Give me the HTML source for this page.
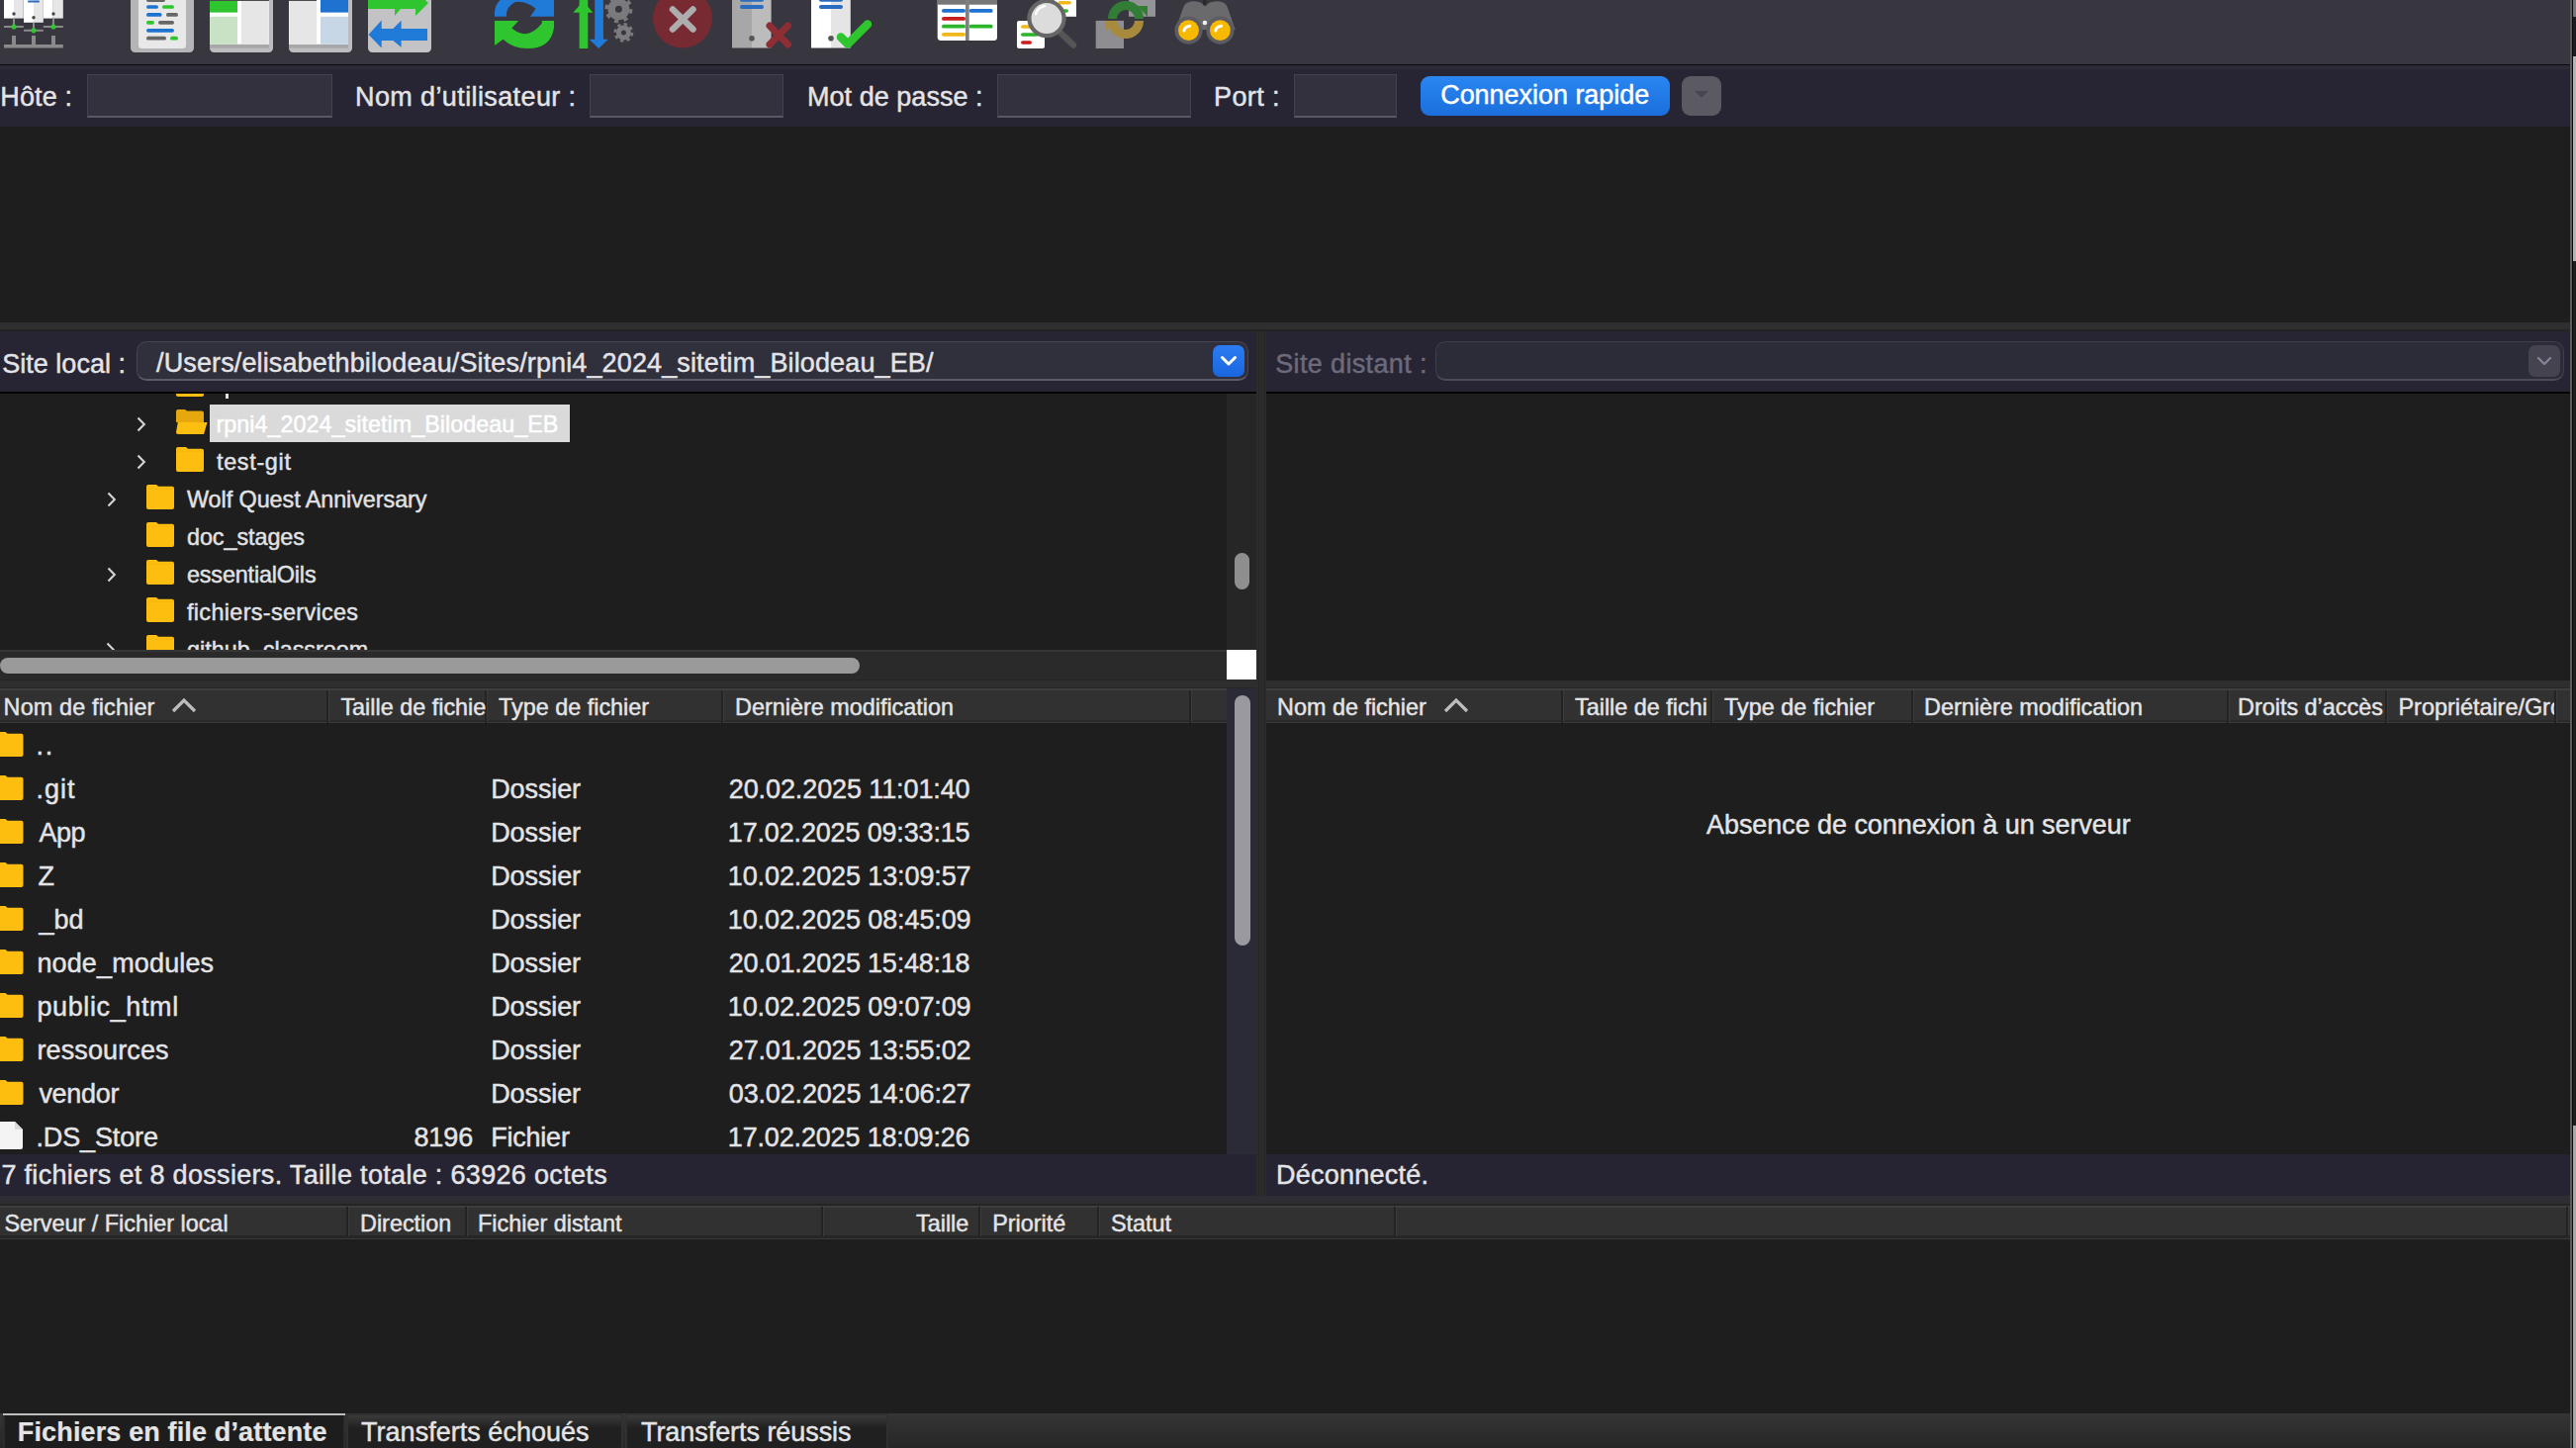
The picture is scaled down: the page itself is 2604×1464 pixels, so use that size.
<!DOCTYPE html>
<html><head><meta charset="utf-8"><style>
html,body{margin:0;padding:0;width:2604px;height:1464px;overflow:hidden;background:#1e1e1e;}
body{position:relative;font-family:"Liberation Sans",sans-serif;}
body div, body svg{position:absolute;}
.t{white-space:nowrap;-webkit-text-stroke:0.45px currentColor;}
</style></head><body>
<div style="left:0px;top:0px;width:2604px;height:65px;background:#38363f;"></div>
<div style="left:0px;top:65px;width:2604px;height:1px;background:#0b0b0d;"></div>
<div style="left:0px;top:66px;width:2604px;height:62px;background:#272533;"></div>
<div style="left:0px;top:66px;width:2604px;height:4px;background:#2b2a36;"></div>
<div class="t" style="left:0.32px;top:84.75px;font-size:27px;line-height:27px;color:#e4e4e6;letter-spacing:0.128px;">Hôte :</div>
<div style="left:88px;top:75px;width:248px;height:44px;background:#32313d;border:1px solid #43424d;border-bottom:2px solid #5a5963;box-sizing:border-box"></div>
<div class="t" style="left:359.00px;top:84.75px;font-size:27px;line-height:27px;color:#e4e4e6;letter-spacing:0.389px;">Nom d’utilisateur :</div>
<div style="left:596px;top:75px;width:196px;height:44px;background:#32313d;border:1px solid #43424d;border-bottom:2px solid #5a5963;box-sizing:border-box"></div>
<div class="t" style="left:816.00px;top:84.75px;font-size:27px;line-height:27px;color:#e4e4e6;letter-spacing:0.038px;">Mot de passe :</div>
<div style="left:1008px;top:75px;width:196px;height:44px;background:#32313d;border:1px solid #43424d;border-bottom:2px solid #5a5963;box-sizing:border-box"></div>
<div class="t" style="left:1227.00px;top:84.75px;font-size:27px;line-height:27px;color:#e4e4e6;letter-spacing:0.400px;">Port :</div>
<div style="left:1308px;top:75px;width:104px;height:44px;background:#32313d;border:1px solid #43424d;border-bottom:2px solid #5a5963;box-sizing:border-box"></div>
<div style="left:1436px;top:77px;width:252px;height:40px;background:linear-gradient(#2a86f0,#1a6fdc);border-radius:9px"></div>
<div class="t" style="left:1456.20px;top:83.05px;font-size:27px;line-height:27px;color:#ffffff;letter-spacing:-0.040px;">Connexion rapide</div>
<div style="left:1700px;top:77px;width:40px;height:40px;background:#5b5a63;border-radius:9px"></div>
<svg style="left:1710px;top:89px" width="20" height="12"><path d="M3 3 L10 10 L17 3 Z" fill="#48474f"/></svg>
<div style="left:0px;top:128px;width:2604px;height:198px;background:#1e1e1e;"></div>
<div style="left:0px;top:326px;width:2604px;height:7px;background:#2f2f2f;"></div>
<div style="left:0px;top:333px;width:2604px;height:2px;background:#232323;"></div>
<div style="left:0px;top:335px;width:1270px;height:61px;background:#272533;"></div>
<div style="left:1280px;top:335px;width:1318px;height:61px;background:#272533;"></div>
<div style="left:0px;top:396px;width:1270px;height:2px;background:#050507;"></div>
<div style="left:1280px;top:396px;width:1318px;height:2px;background:#050507;"></div>
<div class="t" style="left:2.20px;top:355.05px;font-size:27px;line-height:27px;color:#e4e4e6;letter-spacing:0.027px;">Site local :</div>
<div style="left:138px;top:345px;width:1124px;height:40px;background:#302f3c;border:1px solid #474653;border-bottom:2px solid #5c5b68;border-radius:10px;box-sizing:border-box"></div>
<div class="t" style="left:158.00px;top:354.05px;font-size:27px;line-height:27px;color:#e4e4e6;letter-spacing:0.131px;">/Users/elisabethbilodeau/Sites/rpni4_2024_sitetim_Bilodeau_EB/</div>
<div style="left:1226px;top:349px;width:32px;height:32px;background:linear-gradient(#2b7df2,#1a66e0);border-radius:7px"></div>
<svg style="left:1232px;top:358px" width="20" height="14"><path d="M3.5 3.5 L10 10 L16.5 3.5" fill="none" stroke="#fff" stroke-width="3" stroke-linecap="round" stroke-linejoin="round"/></svg>
<div class="t" style="left:1289.20px;top:355.05px;font-size:27px;line-height:27px;color:#6d6a7b;letter-spacing:0.362px;">Site distant :</div>
<div style="left:1451px;top:345px;width:1141px;height:40px;background:#2c2b38;border:1px solid #3f3e4a;border-bottom:2px solid #4c4b58;border-radius:10px;box-sizing:border-box"></div>
<div style="left:2556px;top:349px;width:32px;height:32px;background:#45434f;border-radius:7px"></div>
<svg style="left:2562px;top:358px" width="20" height="14"><path d="M4 4 L10 10 L16 4" fill="none" stroke="#86849a" stroke-width="2.2" stroke-linecap="round" stroke-linejoin="round"/></svg>
<div style="left:1270px;top:335px;width:10px;height:874px;background:#2c2c2c;"></div>
<div style="left:1272px;top:335px;width:1px;height:874px;background:#262626;"></div>
<div style="left:1278px;top:335px;width:1px;height:874px;background:#262626;"></div>
<div style="left:0px;top:398px;width:1240px;height:259px;background:#1e1e1e;"></div>
<div style="left:1240px;top:398px;width:30px;height:259px;background:#262626;"></div>
<div style="left:1248px;top:559px;width:15px;height:37px;background:#8e8e8e;border-radius:8px"></div>
<div style="left:0;top:398px;width:1240px;height:259px;overflow:hidden"><div style="left:0;top:-398px;width:1240px;height:700px">
<svg style="left:178px;top:375.5px" width="28" height="25" viewBox="0 0 28 25"><path d="M0 2 Q0 0 2 0 L10 0 L12 1.8 L26 1.8 Q28 1.8 28 3.8 L28 23 Q28 25 26 25 L2 25 Q0 25 0 23 Z" fill="#fdbe10"/><path d="M0 3.6 L28 3.6 L28 5 L0 5Z" fill="#f5b40e" opacity="0.6"/></svg>
<div style="left:228px;top:398px;width:2.5px;height:4.5px;background:#e2e2e4;"></div>
</div></div>
<div style="left:212px;top:409px;width:364px;height:38px;background:#dadada;"></div>
<svg style="left:137.0px;top:419.5px" width="12" height="18"><path d="M2.5 2.5 L8.8 9 L2.5 15.5" fill="none" stroke="#d4d4d6" stroke-width="2.1"/></svg>
<svg style="left:178px;top:413.5px" width="32" height="25" viewBox="0 0 32 25"><path d="M0 2 Q0 0 2 0 L9 0 L11 1.5 L26 1.5 Q28 1.5 28 3.5 L28 13 L0 13 Z" fill="#e6a80d"/><path d="M1.8 13 L31.5 13 L28 25 L2 25 Q0 25 0 23 Z" fill="#fcbf10"/></svg>
<div class="t" style="left:218.50px;top:418.11px;font-size:23.4px;line-height:23.4px;color:#ffffff;">rpni4_2024_sitetim_Bilodeau_EB</div>
<svg style="left:137.0px;top:457.5px" width="12" height="18"><path d="M2.5 2.5 L8.8 9 L2.5 15.5" fill="none" stroke="#d4d4d6" stroke-width="2.1"/></svg>
<svg style="left:178px;top:451.5px" width="28" height="25" viewBox="0 0 28 25"><path d="M0 2 Q0 0 2 0 L10 0 L12 1.8 L26 1.8 Q28 1.8 28 3.8 L28 23 Q28 25 26 25 L2 25 Q0 25 0 23 Z" fill="#fdbe10"/><path d="M0 3.6 L28 3.6 L28 5 L0 5Z" fill="#f5b40e" opacity="0.6"/></svg>
<div class="t" style="left:219.00px;top:456.11px;font-size:23.4px;line-height:23.4px;color:#e2e2e4;letter-spacing:0.671px;">test-git</div>
<svg style="left:107.0px;top:495.5px" width="12" height="18"><path d="M2.5 2.5 L8.8 9 L2.5 15.5" fill="none" stroke="#d4d4d6" stroke-width="2.1"/></svg>
<svg style="left:148px;top:489.5px" width="28" height="25" viewBox="0 0 28 25"><path d="M0 2 Q0 0 2 0 L10 0 L12 1.8 L26 1.8 Q28 1.8 28 3.8 L28 23 Q28 25 26 25 L2 25 Q0 25 0 23 Z" fill="#fdbe10"/><path d="M0 3.6 L28 3.6 L28 5 L0 5Z" fill="#f5b40e" opacity="0.6"/></svg>
<div class="t" style="left:189.00px;top:494.11px;font-size:23.4px;line-height:23.4px;color:#e2e2e4;letter-spacing:-0.071px;">Wolf Quest Anniversary</div>
<svg style="left:148px;top:527.5px" width="28" height="25" viewBox="0 0 28 25"><path d="M0 2 Q0 0 2 0 L10 0 L12 1.8 L26 1.8 Q28 1.8 28 3.8 L28 23 Q28 25 26 25 L2 25 Q0 25 0 23 Z" fill="#fdbe10"/><path d="M0 3.6 L28 3.6 L28 5 L0 5Z" fill="#f5b40e" opacity="0.6"/></svg>
<div class="t" style="left:189.00px;top:532.11px;font-size:23.4px;line-height:23.4px;color:#e2e2e4;letter-spacing:-0.078px;">doc_stages</div>
<svg style="left:107.0px;top:571.5px" width="12" height="18"><path d="M2.5 2.5 L8.8 9 L2.5 15.5" fill="none" stroke="#d4d4d6" stroke-width="2.1"/></svg>
<svg style="left:148px;top:565.5px" width="28" height="25" viewBox="0 0 28 25"><path d="M0 2 Q0 0 2 0 L10 0 L12 1.8 L26 1.8 Q28 1.8 28 3.8 L28 23 Q28 25 26 25 L2 25 Q0 25 0 23 Z" fill="#fdbe10"/><path d="M0 3.6 L28 3.6 L28 5 L0 5Z" fill="#f5b40e" opacity="0.6"/></svg>
<div class="t" style="left:189.00px;top:570.11px;font-size:23.4px;line-height:23.4px;color:#e2e2e4;letter-spacing:-0.167px;">essentialOils</div>
<svg style="left:148px;top:603.5px" width="28" height="25" viewBox="0 0 28 25"><path d="M0 2 Q0 0 2 0 L10 0 L12 1.8 L26 1.8 Q28 1.8 28 3.8 L28 23 Q28 25 26 25 L2 25 Q0 25 0 23 Z" fill="#fdbe10"/><path d="M0 3.6 L28 3.6 L28 5 L0 5Z" fill="#f5b40e" opacity="0.6"/></svg>
<div class="t" style="left:189.00px;top:608.11px;font-size:23.4px;line-height:23.4px;color:#e2e2e4;letter-spacing:0.337px;">fichiers-services</div>
<div style="left:0;top:640px;width:1240px;height:17px;overflow:hidden">
<div style="left:0;top:-640px;width:1240px;height:700px">
<svg style="left:105.5px;top:647.5px" width="12" height="18"><path d="M2.5 2.5 L8.8 9 L2.5 15.5" fill="none" stroke="#d4d4d6" stroke-width="2.1"/></svg>
<svg style="left:148px;top:641.5px" width="28" height="25" viewBox="0 0 28 25"><path d="M0 2 Q0 0 2 0 L10 0 L12 1.8 L26 1.8 Q28 1.8 28 3.8 L28 23 Q28 25 26 25 L2 25 Q0 25 0 23 Z" fill="#fdbe10"/><path d="M0 3.6 L28 3.6 L28 5 L0 5Z" fill="#f5b40e" opacity="0.6"/></svg>
<div class="t" style="left:189.00px;top:646.11px;font-size:23.4px;line-height:23.4px;color:#e2e2e4;">github_classroom</div>
</div></div>
<div style="left:0px;top:657px;width:1240px;height:30px;background:#2a2a2a;"></div>
<div style="left:0px;top:657px;width:1240px;height:2px;background:#363636;"></div>
<div style="left:0px;top:665px;width:869px;height:16px;background:#9a9a9a;border-radius:8px"></div>
<div style="left:1240px;top:657px;width:30px;height:30px;background:#ffffff;"></div>
<div style="left:1280px;top:398px;width:1318px;height:290px;background:#1e1e1e;"></div>
<div style="left:0px;top:687px;width:1270px;height:9px;background:#2e2e2e;"></div>
<div style="left:1280px;top:688px;width:1318px;height:8px;background:#2e2e2e;"></div>
<div style="left:0px;top:687px;width:1240px;height:1px;background:#242424;"></div>
<div style="left:0px;top:694.5px;width:1270px;height:1.5px;background:#262626;"></div>
<div style="left:1280px;top:694.5px;width:1318px;height:1.5px;background:#262626;"></div>
<div style="left:0px;top:696px;width:1240px;height:35px;background:#313131;"></div>
<div style="left:0px;top:696px;width:1240px;height:2px;background:#3e3e3e;"></div>
<div style="left:0px;top:728px;width:1240px;height:2px;background:#2a2a2a;"></div>
<div style="left:0px;top:729.5px;width:1240px;height:1px;background:#3a3a3a;"></div>
<div style="left:330px;top:698px;width:2px;height:33px;background:#232323;"></div>
<div style="left:332px;top:698px;width:1px;height:33px;background:#3b3b3b;"></div>
<div style="left:490px;top:698px;width:2px;height:33px;background:#232323;"></div>
<div style="left:492px;top:698px;width:1px;height:33px;background:#3b3b3b;"></div>
<div style="left:729px;top:698px;width:2px;height:33px;background:#232323;"></div>
<div style="left:731px;top:698px;width:1px;height:33px;background:#3b3b3b;"></div>
<div style="left:1202px;top:698px;width:2px;height:33px;background:#232323;"></div>
<div style="left:1204px;top:698px;width:1px;height:33px;background:#3b3b3b;"></div>
<div class="t" style="left:3.60px;top:704.11px;font-size:23.4px;line-height:23.4px;color:#e4e4e6;letter-spacing:0.154px;">Nom de fichier</div>
<svg style="left:172px;top:704px" width="28" height="18"><path d="M3 15 L14 4 L25 15" fill="none" stroke="#bdbdbd" stroke-width="3.2"/></svg>
<div class="t" style="left:344.40px;top:704.11px;font-size:23.4px;line-height:23.4px;color:#e4e4e6;">Taille de fichie</div>
<div class="t" style="left:504.00px;top:704.11px;font-size:23.4px;line-height:23.4px;color:#e4e4e6;">Type de fichier</div>
<div class="t" style="left:743.00px;top:704.11px;font-size:23.4px;line-height:23.4px;color:#e4e4e6;">Dernière modification</div>
<div style="left:1240px;top:696px;width:30px;height:471px;background:#2b2a37;"></div>
<div style="left:1248px;top:703px;width:16px;height:253px;background:#9a99a0;border-radius:8px"></div>
<div style="left:0px;top:731px;width:1240px;height:436px;background:#1e1e1e;"></div>
<div style="left:0;top:731px;width:1240px;height:436px;overflow:hidden">
<svg style="left:-5px;top:9px" width="29" height="25" viewBox="0 0 28 25"><path d="M0 2 Q0 0 2 0 L10 0 L12 1.8 L26 1.8 Q28 1.8 28 3.8 L28 23 Q28 25 26 25 L2 25 Q0 25 0 23 Z" fill="#fdbe10"/></svg>
<div class="t" style="left:36.40px;top:10.05px;font-size:27px;line-height:27px;color:#e4e4e6;letter-spacing:1.800px;">..</div>
<svg style="left:-5px;top:53px" width="29" height="25" viewBox="0 0 28 25"><path d="M0 2 Q0 0 2 0 L10 0 L12 1.8 L26 1.8 Q28 1.8 28 3.8 L28 23 Q28 25 26 25 L2 25 Q0 25 0 23 Z" fill="#fdbe10"/></svg>
<div class="t" style="left:36.40px;top:54.05px;font-size:27px;line-height:27px;color:#e4e4e6;letter-spacing:1.033px;">.git</div>
<div class="t" style="left:496.20px;top:54.05px;font-size:27px;line-height:27px;color:#e4e4e6;letter-spacing:-0.100px;">Dossier</div>
<div class="t" style="left:736.80px;top:54.05px;font-size:27px;line-height:27px;color:#e4e4e6;letter-spacing:-0.106px;">20.02.2025 11:01:40</div>
<svg style="left:-5px;top:97px" width="29" height="25" viewBox="0 0 28 25"><path d="M0 2 Q0 0 2 0 L10 0 L12 1.8 L26 1.8 Q28 1.8 28 3.8 L28 23 Q28 25 26 25 L2 25 Q0 25 0 23 Z" fill="#fdbe10"/></svg>
<div class="t" style="left:39.40px;top:98.05px;font-size:27px;line-height:27px;color:#e4e4e6;letter-spacing:-0.500px;">App</div>
<div class="t" style="left:496.20px;top:98.05px;font-size:27px;line-height:27px;color:#e4e4e6;letter-spacing:-0.100px;">Dossier</div>
<div class="t" style="left:735.80px;top:98.05px;font-size:27px;line-height:27px;color:#e4e4e6;letter-spacing:-0.161px;">17.02.2025 09:33:15</div>
<svg style="left:-5px;top:141px" width="29" height="25" viewBox="0 0 28 25"><path d="M0 2 Q0 0 2 0 L10 0 L12 1.8 L26 1.8 Q28 1.8 28 3.8 L28 23 Q28 25 26 25 L2 25 Q0 25 0 23 Z" fill="#fdbe10"/></svg>
<div class="t" style="left:38.40px;top:142.05px;font-size:27px;line-height:27px;color:#e4e4e6;">Z</div>
<div class="t" style="left:496.20px;top:142.05px;font-size:27px;line-height:27px;color:#e4e4e6;letter-spacing:-0.100px;">Dossier</div>
<div class="t" style="left:735.80px;top:142.05px;font-size:27px;line-height:27px;color:#e4e4e6;letter-spacing:-0.106px;">10.02.2025 13:09:57</div>
<svg style="left:-5px;top:185px" width="29" height="25" viewBox="0 0 28 25"><path d="M0 2 Q0 0 2 0 L10 0 L12 1.8 L26 1.8 Q28 1.8 28 3.8 L28 23 Q28 25 26 25 L2 25 Q0 25 0 23 Z" fill="#fdbe10"/></svg>
<div class="t" style="left:39.40px;top:186.05px;font-size:27px;line-height:27px;color:#e4e4e6;letter-spacing:0.100px;">_bd</div>
<div class="t" style="left:496.20px;top:186.05px;font-size:27px;line-height:27px;color:#e4e4e6;letter-spacing:-0.100px;">Dossier</div>
<div class="t" style="left:735.80px;top:186.05px;font-size:27px;line-height:27px;color:#e4e4e6;letter-spacing:-0.106px;">10.02.2025 08:45:09</div>
<svg style="left:-5px;top:229px" width="29" height="25" viewBox="0 0 28 25"><path d="M0 2 Q0 0 2 0 L10 0 L12 1.8 L26 1.8 Q28 1.8 28 3.8 L28 23 Q28 25 26 25 L2 25 Q0 25 0 23 Z" fill="#fdbe10"/></svg>
<div class="t" style="left:37.40px;top:230.05px;font-size:27px;line-height:27px;color:#e4e4e6;letter-spacing:0.145px;">node_modules</div>
<div class="t" style="left:496.20px;top:230.05px;font-size:27px;line-height:27px;color:#e4e4e6;letter-spacing:-0.100px;">Dossier</div>
<div class="t" style="left:736.80px;top:230.05px;font-size:27px;line-height:27px;color:#e4e4e6;letter-spacing:-0.217px;">20.01.2025 15:48:18</div>
<svg style="left:-5px;top:273px" width="29" height="25" viewBox="0 0 28 25"><path d="M0 2 Q0 0 2 0 L10 0 L12 1.8 L26 1.8 Q28 1.8 28 3.8 L28 23 Q28 25 26 25 L2 25 Q0 25 0 23 Z" fill="#fdbe10"/></svg>
<div class="t" style="left:37.40px;top:274.05px;font-size:27px;line-height:27px;color:#e4e4e6;letter-spacing:0.620px;">public_html</div>
<div class="t" style="left:496.20px;top:274.05px;font-size:27px;line-height:27px;color:#e4e4e6;letter-spacing:-0.100px;">Dossier</div>
<div class="t" style="left:735.80px;top:274.05px;font-size:27px;line-height:27px;color:#e4e4e6;letter-spacing:-0.106px;">10.02.2025 09:07:09</div>
<svg style="left:-5px;top:317px" width="29" height="25" viewBox="0 0 28 25"><path d="M0 2 Q0 0 2 0 L10 0 L12 1.8 L26 1.8 Q28 1.8 28 3.8 L28 23 Q28 25 26 25 L2 25 Q0 25 0 23 Z" fill="#fdbe10"/></svg>
<div class="t" style="left:37.40px;top:318.05px;font-size:27px;line-height:27px;color:#e4e4e6;letter-spacing:0.122px;">ressources</div>
<div class="t" style="left:496.20px;top:318.05px;font-size:27px;line-height:27px;color:#e4e4e6;letter-spacing:-0.100px;">Dossier</div>
<div class="t" style="left:736.80px;top:318.05px;font-size:27px;line-height:27px;color:#e4e4e6;letter-spacing:-0.161px;">27.01.2025 13:55:02</div>
<svg style="left:-5px;top:361px" width="29" height="25" viewBox="0 0 28 25"><path d="M0 2 Q0 0 2 0 L10 0 L12 1.8 L26 1.8 Q28 1.8 28 3.8 L28 23 Q28 25 26 25 L2 25 Q0 25 0 23 Z" fill="#fdbe10"/></svg>
<div class="t" style="left:39.40px;top:362.05px;font-size:27px;line-height:27px;color:#e4e4e6;letter-spacing:-0.280px;">vendor</div>
<div class="t" style="left:496.20px;top:362.05px;font-size:27px;line-height:27px;color:#e4e4e6;letter-spacing:-0.100px;">Dossier</div>
<div class="t" style="left:736.80px;top:362.05px;font-size:27px;line-height:27px;color:#e4e4e6;letter-spacing:-0.161px;">03.02.2025 14:06:27</div>
<svg style="left:0px;top:403px" width="24" height="28"><path d="M0 0 L15 0 L23 8 L23 26 Q23 28 21 28 L0 28 Z" fill="#f4f4f4"/><path d="M15 0 L15 8 L23 8 Z" fill="#d9d9d9"/></svg>
<div class="t" style="left:36.40px;top:406.05px;font-size:27px;line-height:27px;color:#e4e4e6;letter-spacing:-0.125px;">.DS_Store</div>
<div class="t" style="left:496.20px;top:406.05px;font-size:27px;line-height:27px;color:#e4e4e6;letter-spacing:-0.217px;">Fichier</div>
<div class="t" style="left:735.80px;top:406.05px;font-size:27px;line-height:27px;color:#e4e4e6;letter-spacing:-0.161px;">17.02.2025 18:09:26</div>
<div class="t" style="left:418.40px;top:406.05px;font-size:27px;line-height:27px;color:#e4e4e6;letter-spacing:-0.033px;">8196</div>
</div>
<div style="left:1280px;top:696px;width:1318px;height:35px;background:#313131;"></div>
<div style="left:1280px;top:696px;width:1318px;height:2px;background:#3e3e3e;"></div>
<div style="left:1280px;top:728px;width:1318px;height:2px;background:#2a2a2a;"></div>
<div style="left:1280px;top:729.5px;width:1318px;height:1px;background:#3a3a3a;"></div>
<div style="left:1578px;top:698px;width:2px;height:33px;background:#232323;"></div>
<div style="left:1580px;top:698px;width:1px;height:33px;background:#3b3b3b;"></div>
<div style="left:1729px;top:698px;width:2px;height:33px;background:#232323;"></div>
<div style="left:1731px;top:698px;width:1px;height:33px;background:#3b3b3b;"></div>
<div style="left:1932px;top:698px;width:2px;height:33px;background:#232323;"></div>
<div style="left:1934px;top:698px;width:1px;height:33px;background:#3b3b3b;"></div>
<div style="left:2251px;top:698px;width:2px;height:33px;background:#232323;"></div>
<div style="left:2253px;top:698px;width:1px;height:33px;background:#3b3b3b;"></div>
<div style="left:2411px;top:698px;width:2px;height:33px;background:#232323;"></div>
<div style="left:2413px;top:698px;width:1px;height:33px;background:#3b3b3b;"></div>
<div style="left:2582px;top:698px;width:2px;height:33px;background:#232323;"></div>
<div style="left:2584px;top:698px;width:1px;height:33px;background:#3b3b3b;"></div>
<div class="t" style="left:1291.00px;top:704.11px;font-size:23.4px;line-height:23.4px;color:#e4e4e6;">Nom de fichier</div>
<svg style="left:1458px;top:704px" width="28" height="18"><path d="M3 15 L14 4 L25 15" fill="none" stroke="#bdbdbd" stroke-width="3.2"/></svg>
<div class="t" style="left:1592.00px;top:704.11px;font-size:23.4px;line-height:23.4px;color:#e4e4e6;">Taille de fichi</div>
<div class="t" style="left:1743.00px;top:704.11px;font-size:23.4px;line-height:23.4px;color:#e4e4e6;">Type de fichier</div>
<div class="t" style="left:1945.00px;top:704.11px;font-size:23.4px;line-height:23.4px;color:#e4e4e6;">Dernière modification</div>
<div class="t" style="left:2262.00px;top:704.11px;font-size:23.4px;line-height:23.4px;color:#e4e4e6;">Droits d’accès</div>
<div style="left:2414px;top:696px;width:168px;height:35px;overflow:hidden">
<div class="t" style="left:10.50px;top:8.11px;font-size:23.4px;line-height:23.4px;color:#e4e4e6;">Propriétaire/Groupe</div>
</div>
<div style="left:1280px;top:731px;width:1318px;height:436px;background:#1e1e1e;"></div>
<div class="t" style="left:1725.00px;top:821.05px;font-size:27px;line-height:27px;color:#e4e4e6;letter-spacing:-0.066px;">Absence de connexion à un serveur</div>
<div style="left:0px;top:1167px;width:1270px;height:42px;background:#262433;"></div>
<div style="left:1280px;top:1167px;width:1318px;height:42px;background:#262433;"></div>
<div class="t" style="left:1.40px;top:1175.05px;font-size:27px;line-height:27px;color:#e4e4e6;letter-spacing:0.319px;">7 fichiers et 8 dossiers. Taille totale : 63926 octets</div>
<div class="t" style="left:1290.00px;top:1175.05px;font-size:27px;line-height:27px;color:#e4e4e6;letter-spacing:0.250px;">Déconnecté.</div>
<div style="left:0px;top:1209px;width:2604px;height:8px;background:#2e2d33;"></div>
<div style="left:0px;top:1217px;width:2604px;height:2px;background:#242424;"></div>
<div style="left:0px;top:1219px;width:2598px;height:33px;background:#313131;"></div>
<div style="left:0px;top:1219px;width:2598px;height:2px;background:#3e3e3e;"></div>
<div style="left:0px;top:1249px;width:2598px;height:2px;background:#2a2a2a;"></div>
<div style="left:0px;top:1250.5px;width:2598px;height:1px;background:#3a3a3a;"></div>
<div style="left:0px;top:1249px;width:2598px;height:3px;background:#262626;"></div>
<div style="left:0px;top:1252px;width:2598px;height:1px;background:#3a3a3a;"></div>
<div style="left:350px;top:1220px;width:2px;height:30px;background:#232323;"></div>
<div style="left:352px;top:1220px;width:1px;height:30px;background:#3b3b3b;"></div>
<div style="left:470px;top:1220px;width:2px;height:30px;background:#232323;"></div>
<div style="left:472px;top:1220px;width:1px;height:30px;background:#3b3b3b;"></div>
<div style="left:830px;top:1220px;width:2px;height:30px;background:#232323;"></div>
<div style="left:832px;top:1220px;width:1px;height:30px;background:#3b3b3b;"></div>
<div style="left:989px;top:1220px;width:2px;height:30px;background:#232323;"></div>
<div style="left:991px;top:1220px;width:1px;height:30px;background:#3b3b3b;"></div>
<div style="left:1109px;top:1220px;width:2px;height:30px;background:#232323;"></div>
<div style="left:1111px;top:1220px;width:1px;height:30px;background:#3b3b3b;"></div>
<div style="left:1409px;top:1220px;width:2px;height:30px;background:#232323;"></div>
<div style="left:1411px;top:1220px;width:1px;height:30px;background:#3b3b3b;"></div>
<div style="left:2594px;top:1220px;width:2px;height:30px;background:#232323;"></div>
<div style="left:2596px;top:1220px;width:1px;height:30px;background:#3b3b3b;"></div>
<div class="t" style="left:4.40px;top:1225.81px;font-size:23.4px;line-height:23.4px;color:#e4e4e6;">Serveur / Fichier local</div>
<div class="t" style="left:364.00px;top:1225.81px;font-size:23.4px;line-height:23.4px;color:#e4e4e6;">Direction</div>
<div class="t" style="left:483.00px;top:1225.81px;font-size:23.4px;line-height:23.4px;color:#e4e4e6;">Fichier distant</div>
<div class="t" style="left:926.00px;top:1225.81px;font-size:23.4px;line-height:23.4px;color:#e4e4e6;">Taille</div>
<div class="t" style="left:1003.20px;top:1225.81px;font-size:23.4px;line-height:23.4px;color:#e4e4e6;">Priorité</div>
<div class="t" style="left:1123.00px;top:1225.81px;font-size:23.4px;line-height:23.4px;color:#e4e4e6;">Statut</div>
<div style="left:0px;top:1253px;width:2598px;height:176px;background:#1e1e1e;"></div>
<div style="left:0px;top:1429px;width:2604px;height:35px;background:linear-gradient(#353535,#262626);"></div>
<div style="left:3px;top:1429px;width:346px;height:35px;background:#1d1d1d;border-left:2px solid #2c2c2c;border-right:2px solid #2c2c2c;box-sizing:border-box"></div>
<div style="left:3px;top:1429px;width:346px;height:2px;background:#bdbdbd;"></div>
<div class="t" style="left:17.80px;top:1435.05px;font-size:27px;line-height:27px;color:#e4e4e6;letter-spacing:0.144px;font-weight:bold;-webkit-text-stroke:0.2px currentColor">Fichiers en file d’attente</div>
<div style="left:350px;top:1429px;width:280px;height:35px;background:linear-gradient(#3a3a3a,#202020 40%);border:2px solid #303030;border-bottom:none;box-sizing:border-box"></div>
<div class="t" style="left:365.00px;top:1434.65px;font-size:27px;line-height:27px;color:#e4e4e6;letter-spacing:0.029px;">Transferts échoués</div>
<div style="left:632px;top:1429px;width:266px;height:35px;background:linear-gradient(#3a3a3a,#202020 40%);border:2px solid #303030;border-bottom:none;box-sizing:border-box"></div>
<div class="t" style="left:648.00px;top:1434.65px;font-size:27px;line-height:27px;color:#e4e4e6;letter-spacing:-0.059px;">Transferts réussis</div>
<div style="left:2598px;top:0px;width:2px;height:1464px;background:#5c5c60;"></div>
<div style="left:2600px;top:0px;width:1px;height:1464px;background:#0a0a0a;"></div>
<div style="left:2601px;top:0px;width:3px;height:1464px;background:#1e1e1e;"></div>
<div style="left:2601px;top:0px;width:3px;height:17px;background:#77767c;"></div>
<div style="left:2601px;top:17px;width:3px;height:40px;background:#1c1b24;"></div>
<div style="left:2601px;top:57px;width:3px;height:207px;background:#b5b5b5;"></div>
<div style="left:2601px;top:1138px;width:3px;height:326px;background:#a9a9a9;"></div>
<svg style="left:0;top:0" width="1300" height="65" viewBox="0 0 1300 65">
<!-- 1 site manager -->
<g>
<rect x="4" y="-3" width="10" height="21.6" fill="#ffffff"/><rect x="14" y="-3" width="9.8" height="21.6" fill="#e6e6e6"/>
<rect x="24" y="-3" width="10" height="25.8" fill="#ffffff"/><rect x="34" y="-3" width="9.8" height="25.8" fill="#e6e6e6"/>
<rect x="43.8" y="-3" width="10" height="21.6" fill="#ffffff"/><rect x="53.8" y="-3" width="10" height="21.6" fill="#e6e6e6"/>
<rect x="28" y="0.6" width="12" height="1.8" rx="0.9" fill="#2a6cc0"/>
<circle cx="14" cy="14" r="1.7" fill="#444"/><circle cx="34" cy="17.8" r="1.7" fill="#444"/><circle cx="54" cy="14" r="1.7" fill="#444"/>
<rect x="13" y="18.6" width="2" height="9" fill="#8a8a8a"/><rect x="33" y="22.8" width="2" height="8" fill="#8a8a8a"/><rect x="53" y="18.6" width="2" height="9" fill="#8a8a8a"/>
<rect x="4" y="26" width="19.8" height="2" fill="#8a8a8a"/><rect x="24" y="29.8" width="19.8" height="2" fill="#8a8a8a"/><rect x="43.8" y="26" width="20" height="2" fill="#8a8a8a"/>
<circle cx="14" cy="27" r="2.6" fill="#2ec52e"/><circle cx="34" cy="30.8" r="2.6" fill="#2ec52e"/><circle cx="54" cy="27" r="2.6" fill="#2ec52e"/>
<rect x="12" y="36" width="4" height="12" fill="#8a8a8a"/><rect x="32" y="36" width="4" height="12" fill="#8a8a8a"/><rect x="52" y="36" width="4" height="12" fill="#8a8a8a"/>
<rect x="4" y="45" width="59.8" height="3.5" fill="#8a8a8a"/>
</g>
<!-- 2 log -->
<g>
<rect x="132" y="-6" width="64" height="59" rx="4.5" fill="#b5b5b8"/>
<rect x="140" y="-6" width="48" height="55" rx="3.5" fill="#e8e8e8"/>
<g>
<rect x="148" y="-1.8" width="19" height="3.7" rx="1.85" fill="#666"/>
<rect x="148" y="5.15" width="12" height="3.7" rx="1.85" fill="#1f73d0"/><rect x="164" y="5.15" width="12" height="3.7" rx="1.85" fill="#2ec52e"/>
<rect x="148" y="13.05" width="15.6" height="3.7" rx="1.85" fill="#1f73d0"/><rect x="168" y="13.05" width="12" height="3.7" rx="1.85" fill="#666"/>
<rect x="148" y="20.95" width="8" height="3.7" rx="1.85" fill="#2ec52e"/><rect x="160" y="20.95" width="16" height="3.7" rx="1.85" fill="#666"/>
<rect x="148" y="28.95" width="28" height="3.7" rx="1.85" fill="#1f73d0"/>
<rect x="148" y="36.85" width="20" height="3.7" rx="1.85" fill="#666"/><rect x="172" y="36.85" width="8" height="3.7" rx="1.85" fill="#2ec52e"/>
</g>
</g>
<!-- 3 local tree -->
<g>
<rect x="212" y="-6" width="64" height="59" rx="4.5" fill="#bdbdc0"/>
<rect x="212" y="44.7" width="60" height="4" fill="#a8a8aa"/>
<rect x="212" y="-6" width="60" height="50.7" fill="#ffffff"/>
<rect x="212" y="1" width="28" height="11.6" fill="#2ec52e"/>
<rect x="212" y="16.8" width="28" height="27.9" fill="#c9e1c5"/>
<rect x="243.8" y="1" width="28" height="43.7" fill="#e6e6e6"/>
<rect x="212" y="-6" width="60" height="7" fill="#4d4d4d"/>
</g>
<!-- 4 remote tree -->
<g>
<rect x="292" y="-6" width="64" height="59" rx="4.5" fill="#bdbdc0"/>
<rect x="292" y="44.7" width="60" height="4" fill="#a8a8aa"/>
<rect x="292" y="-6" width="60" height="50.7" fill="#ffffff"/>
<rect x="292.3" y="1" width="27.9" height="43.7" fill="#e6e6e6"/>
<rect x="324" y="-6" width="28" height="18.6" fill="#1f73d0"/>
<rect x="324" y="-6" width="28" height="5" fill="#3a6f9e"/>
<rect x="324" y="16.8" width="28" height="27.9" fill="#c8d7e5"/>
<rect x="292" y="-6" width="28" height="7" fill="#4d4d4d"/>
</g>
<!-- 5 sync -->
<g>
<rect x="372" y="-6" width="64" height="59" rx="4.5" fill="#c3c3c6"/>
<path d="M372 -6 L417 -6 L417 -12 L433 3 L420 16 L420 9 L405 9 L399 16 L399 9 L372 9 Z" fill="#2ec52e"/>
<path d="M372.5 35 L385.7 20.5 L385.7 29 L397.3 29 L405.6 20.7 L405.6 29 L432 29 L432 41 L405.6 41 L405.6 47.7 L397.3 41 L385.7 41 L385.7 48.5 Z" fill="#1f7ad8"/>
</g>
<!-- 6 refresh -->
<g>
<path d="M500 16.8 L500 12 Q501 -6 530 -6 L560 -6 L560 16.8 L536 16.8 L541.5 8.7 Q531 0.5 521 2 Q511.7 6 511.7 16.8 Z" fill="#1f7ad8"/>
<path d="M500 21.1 L524.2 21.1 L517.3 28.6 Q533.5 42 547.8 23.6 L547.8 21.1 L560 21.1 L560 28 Q557 49 533.5 49 Q518 49 508.6 39.8 L500 46 Z" fill="#2ec52e"/>
</g>
<!-- 7 process queue -->
<g>
<rect x="585.6" y="-6" width="8.7" height="55" fill="#2ec52e"/>
<path d="M579.4 12.7 L589.5 1 L599.3 12.7 Z" fill="#2ec52e"/>
<rect x="601.2" y="-6" width="8.7" height="47" fill="#1f7ad8"/>
<path d="M595.6 39.8 L614.8 39.8 L605.2 49 Z" fill="#1f7ad8"/>
<circle cx="625.4" cy="9.3" r="7.25" fill="none" stroke="#7a7a7c" stroke-width="7.5"/>
<circle cx="625.4" cy="9.3" r="12.3" fill="none" stroke="#7a7a7c" stroke-width="3.4" stroke-dasharray="4.3 5.35"/>
<circle cx="630.4" cy="32.9" r="5" fill="none" stroke="#7c7c7e" stroke-width="5"/>
<circle cx="630.4" cy="32.9" r="8.6" fill="none" stroke="#7c7c7e" stroke-width="2.6" stroke-dasharray="3.4 3.35"/>
</g>
<!-- 8 cancel -->
<g>
<circle cx="690" cy="18.5" r="30" fill="#772a31"/>
<path d="M680 9.5 L700.5 29.5 M700.5 9.5 L680 29.5" stroke="#adadad" stroke-width="6.5" stroke-linecap="round"/>
</g>
<!-- 9 disconnect -->
<g>
<rect x="740" y="-6" width="20" height="54.5" fill="#a7a7a7"/><rect x="760" y="-6" width="19.6" height="54.5" fill="#bcbcbc"/>
<rect x="748" y="-2" width="24" height="3.8" rx="1.9" fill="#2a6cbf"/>
<rect x="748" y="5" width="24" height="3.9" rx="1.95" fill="#2a6cbf"/>
<circle cx="760" cy="38.7" r="2.8" fill="#555"/>
<path d="M778 26 L796.5 45 M796.5 26 L778 45" stroke="#8d2d34" stroke-width="7" stroke-linecap="round"/>
</g>
<!-- 10 reconnect -->
<g>
<rect x="820" y="-6" width="20" height="54.5" fill="#ffffff"/><rect x="840" y="-6" width="19.8" height="54.5" fill="#e5e5e5"/>
<rect x="828" y="-2" width="24" height="3.8" rx="1.9" fill="#2a6cbf"/>
<rect x="828" y="5" width="24" height="3.9" rx="1.95" fill="#2a6cbf"/>
<circle cx="840" cy="38.7" r="2.8" fill="#555"/>
<path d="M850 37.5 L857 44.5 L877 24.5" fill="none" stroke="#2ec52e" stroke-width="8.5" stroke-linecap="round" stroke-linejoin="round"/>
</g>
<!-- 11 filter -->
<g>
<rect x="947.7" y="-6" width="60.3" height="47" rx="3.5" fill="#ffffff"/>
<rect x="947.7" y="-6" width="60.3" height="10.7" fill="#777"/>
<rect x="976" y="-6" width="3.7" height="47" fill="#808080"/>
<rect x="952" y="9" width="24" height="3.8" rx="1.9" fill="#1f73d0"/><rect x="979.7" y="9" width="24" height="3.8" rx="1.9" fill="#1f73d0"/>
<rect x="952" y="17" width="24" height="3.8" rx="1.9" fill="#c81e1e"/>
<rect x="952" y="24.8" width="24" height="3.8" rx="1.9" fill="#2ab52a"/><rect x="979.7" y="24.8" width="24" height="3.8" rx="1.9" fill="#2ab52a"/>
<rect x="952" y="32.9" width="24" height="3.8" rx="1.9" fill="#f1b81a"/>
</g>
<!-- 12 search -->
<g>
<rect x="1065.5" y="-6" width="22.5" height="22.8" fill="#ffffff"/>
<rect x="1069.8" y="1" width="13" height="3.5" rx="1.75" fill="#f1b81a"/>
<rect x="1074" y="9.2" width="6" height="3.5" rx="1.75" fill="#2ab52a"/>
<rect x="1028" y="20.9" width="28" height="28.1" rx="2" fill="#ffffff"/>
<rect x="1032" y="25.2" width="18" height="3.5" rx="1.75" fill="#f1b81a"/>
<rect x="1032" y="33.2" width="18" height="3.5" rx="1.75" fill="#2ab52a"/>
<rect x="1032" y="41.2" width="11" height="3.5" rx="1.75" fill="#c81e1e"/>
<path d="M1073 34 L1085 45.5" stroke="#555" stroke-width="6.5" stroke-linecap="round"/>
<circle cx="1058" cy="18.6" r="17.6" fill="#dcdcdc" stroke="#676767" stroke-width="4.2"/>
<path d="M1047 14 A12 12 0 0 1 1056 6" fill="none" stroke="#ffffff" stroke-width="2.5" stroke-linecap="round"/>
</g>
<!-- 13 sync browse (disabled) -->
<g>
<rect x="1141" y="-6" width="27" height="22.8" fill="#949498"/>
<rect x="1107.7" y="20.9" width="28.3" height="28.1" fill="#8e8e92"/>
<path d="M1120 19 A18 18 0 0 1 1156 19 L1147 19 A9 9 0 0 0 1129 19 Z" fill="#327d36"/>
<path d="M1150 6 L1160 6 L1160 17 Z" fill="#327d36"/>
<path d="M1120 21 A18 18 0 0 0 1156 21 L1147 21 A9 9 0 0 1 1129 21 Z" fill="#a88a3c"/>
<path d="M1118 21 L1128 21 L1118 31 Z" fill="#a88a3c"/>
</g>
<!-- 14 binoculars -->
<g>
<path d="M1188.3 30 L1196 8 Q1198 1 1207 1.2 Q1215 1.5 1217 6 L1219 6 Q1222 1.5 1230 1.2 Q1239 1 1241 8 L1248.7 30 Z" fill="#6a6a6c"/>
<circle cx="1201.5" cy="30.65" r="14.1" fill="#5c5c62"/>
<circle cx="1233.4" cy="30.65" r="14.1" fill="#5c5c62"/>
<circle cx="1201.5" cy="30.65" r="10.4" fill="#f7b900"/>
<circle cx="1233.4" cy="30.65" r="10.4" fill="#f7b900"/>
<path d="M1197 31 Q1197.5 27 1202.8 26.3" fill="none" stroke="#fff" stroke-width="3" stroke-linecap="round"/>
<path d="M1228.9 31 Q1229.4 27 1234.7 26.3" fill="none" stroke="#fff" stroke-width="3" stroke-linecap="round"/>
<circle cx="1217.9" cy="23" r="2.3" fill="#f0f0f0"/>
<rect x="1216" y="-6" width="3.4" height="10.5" fill="#2a2a2a"/>
</g>
</svg>

</body></html>
